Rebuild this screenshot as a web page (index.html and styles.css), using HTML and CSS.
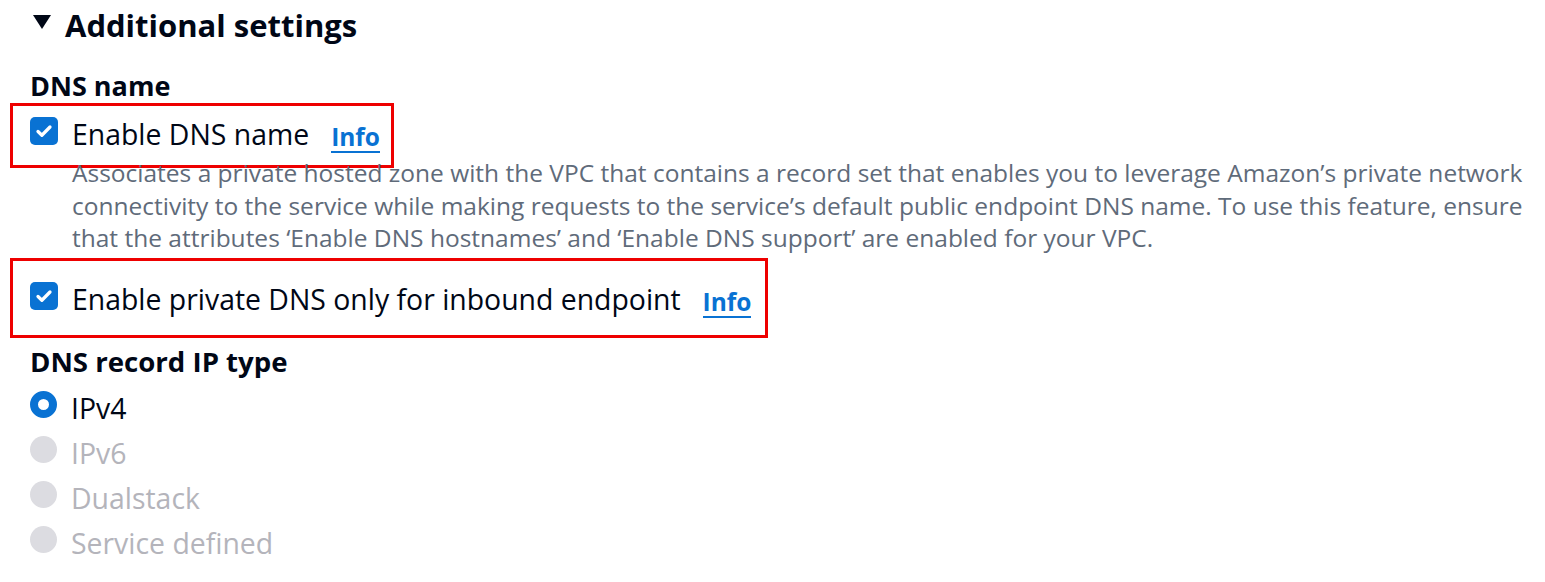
FILE: index.html
```html
<!DOCTYPE html>
<html lang="en">
<head>
<meta charset="UTF-8">
<title>Additional settings</title>
<link rel="stylesheet" href="styles.css">
</head>
<body>
<div class="settings">
  <div class="header">
    <span class="caret"></span>
    <h2>Additional settings</h2>
  </div>

  <div class="group-label">DNS name</div>
  <div class="mark">
    <span class="checkbox">
      <svg viewBox="0 0 16 16" width="20" height="20"><path d="M3.2 8.4l3.1 3L12.8 4.8" fill="none" stroke="#fff" stroke-width="2.6" stroke-linecap="round" stroke-linejoin="round"/></svg>
    </span>
    <span class="label">Enable DNS name</span>
    <a class="info">Info</a>
  </div>
  <p class="desc">Associates a private hosted zone with the VPC that contains a record set that enables you to leverage Amazon’s private network connectivity to the service while making requests to the service’s default public endpoint DNS name. To use this feature, ensure that the attributes ‘Enable DNS hostnames’ and ‘Enable DNS support’ are enabled for your VPC.</p>

  <div class="mark mark-wide">
    <span class="checkbox">
      <svg viewBox="0 0 16 16" width="20" height="20"><path d="M3.2 8.4l3.1 3L12.8 4.8" fill="none" stroke="#fff" stroke-width="2.6" stroke-linecap="round" stroke-linejoin="round"/></svg>
    </span>
    <span class="label">Enable private DNS only for inbound endpoint</span>
    <a class="info">Info</a>
  </div>

  <div class="group-label group-ip">DNS record IP type</div>
  <div class="radios">
    <div class="radio-row"><span class="radio checked"></span><span class="label">IPv4</span></div>
    <div class="radio-row disabled"><span class="radio"></span><span class="label">IPv6</span></div>
    <div class="radio-row disabled"><span class="radio"></span><span class="label">Dualstack</span></div>
    <div class="radio-row disabled"><span class="radio"></span><span class="label">Service defined</span></div>
  </div>
</div>
</body>
</html>
```

FILE: styles.css
```css
body {
  margin: 0;
  background: #fff;
  color: #000716;
  font-family: 'Open Sans', sans-serif;
}

.settings {
  padding: 4px 0 0 30px;
}

.header {
  display: flex;
  align-items: center;
  gap: 14px;
  height: 42px;
}

.caret {
  width: 0;
  height: 0;
  margin: -6px 0 0 3px;
  border-left: 9px solid transparent;
  border-right: 9px solid transparent;
  border-top: 14px solid #000716;
}

h2 {
  margin: 0;
  font-size: 31px;
  line-height: 42px;
  font-weight: 700;
}

.group-label {
  margin-top: 24px;
  font-size: 27px;
  font-weight: 700;
  line-height: 32px;
}

.mark {
  display: inline-flex;
  align-items: flex-start;
  margin: 1px 0 0 -20px;
  padding: 11px 11px 12px 17px;
  border: 3px solid #ee0000;
}

.checkbox {
  width: 28px;
  height: 28px;
  border-radius: 5px;
  background: #0972d3;
  display: flex;
  align-items: center;
  justify-content: center;
  flex: none;
}

.label {
  margin-left: 14px;
  font-size: 28.4px;
  line-height: 34px;
  white-space: nowrap;
}

.info {
  margin: 6px 0 0 22px;
  font-size: 24.5px;
  font-weight: 700;
  line-height: 28px;
  color: #0972d3;
  border-bottom: 2px solid #0972d3;
}

.desc {
  margin: -11px 0 0 42px;
  max-width: 1470px;
  font-size: 24.5px;
  line-height: 32.5px;
  color: #5f6b7a;
}

.mark-wide {
  margin-top: 3px;
  padding: 21px 14px 17px 17px;
}

.group-ip {
  margin-top: 7px;
  font-size: 27.6px;
}

.radios {
  display: flex;
  flex-direction: column;
  gap: 11px;
  margin-top: 14px;
}

.radio-row {
  display: flex;
  align-items: flex-start;
}

.radio {
  width: 27px;
  height: 27px;
  border-radius: 50%;
  background: #dcdce1;
  box-sizing: border-box;
  flex: none;
}

.radio.checked {
  background: #fff;
  border: 8.5px solid #0972d3;
}

.disabled .label {
  color: #b4b4bb;
}
```
